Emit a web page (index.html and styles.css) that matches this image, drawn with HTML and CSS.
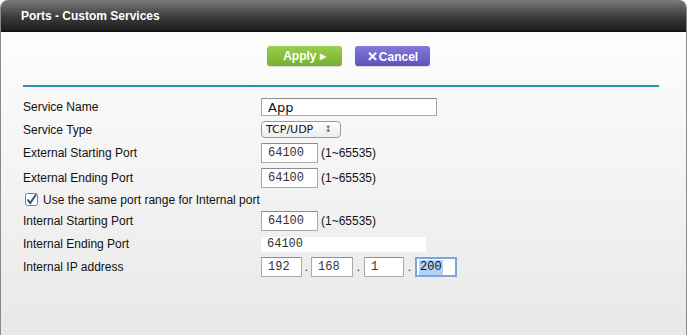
FILE: index.html
```html
<!DOCTYPE html>
<html lang="en">
<head>
  <meta charset="UTF-8">
  <title>Ports - Custom Services</title>
  <link rel="stylesheet" href="styles.css">
</head>
<body>
  <div class="panel">
    <div class="panel-header">Ports - Custom Services</div>

    <div class="panel-body">
      <div class="actions">
        <button class="btn btn-apply">Apply <span class="arrow">&#9654;</span></button>
        <button class="btn btn-cancel"><span class="x">&#10005;</span>Cancel</button>
      </div>

      <div class="divider"></div>

      <div class="form">
        <div class="row r1">
          <label>Service Name</label>
          <div class="field"><input class="text name" type="text" value="App"></div>
        </div>
        <div class="row r2">
          <label>Service Type</label>
          <div class="field">
            <div class="select">TCP/UDP <span class="updown">&#8597;</span></div>
          </div>
        </div>
        <div class="row r3">
          <label>External Starting Port</label>
          <div class="field"><input class="text port" type="text" value="64100"><span class="range">(1~65535)</span></div>
        </div>
        <div class="row r4">
          <label>External Ending Port</label>
          <div class="field"><input class="text port" type="text" value="64100"><span class="range">(1~65535)</span></div>
        </div>
        <div class="row r5 check-row">
          <span class="checkbox">
            <svg width="13" height="13" viewBox="0 0 13 13">
              <rect x="0.5" y="0.5" width="12" height="12" rx="2" fill="#fff" stroke="#6b7fa6"/>
              <path d="M2.5 6.5 L5.2 10 L11 1.5" fill="none" stroke="#2b4f8c" stroke-width="2"/>
            </svg>
          </span>
          <span>Use the same port range for Internal port</span>
        </div>
        <div class="row r6">
          <label>Internal Starting Port</label>
          <div class="field"><input class="text port" type="text" value="64100"><span class="range">(1~65535)</span></div>
        </div>
        <div class="row r7">
          <label>Internal Ending Port</label>
          <div class="field"><div class="plain">64100</div></div>
        </div>
        <div class="row r8">
          <label>Internal IP address</label>
          <div class="field ip">
            <input class="text octet o1" type="text" value="192"><span class="dot d1">.</span>
            <input class="text octet o2" type="text" value="168"><span class="dot">.</span>
            <input class="text octet o3" type="text" value="1"><span class="dot">.</span>
            <div class="octet focused"><span class="sel">200</span></div>
          </div>
        </div>
      </div>
    </div>
  </div>
</body>
</html>
```

FILE: styles.css
```css
body {
  margin: 0;
  font-family: "Liberation Sans", Arial, sans-serif;
  font-size: 12px;
  color: #111;
  background: #fff;
}

.panel {
  height: 335px;
  border-left: 1px solid #8a8a8a;
  border-right: 1px solid #8a8a8a;
  border-radius: 8px 8px 0 0;
  overflow: hidden;
  display: flex;
  flex-direction: column;
}

.panel-header {
  height: 32px;
  flex: none;
  background: linear-gradient(#7a7a7a, #3c3c3c 55%, #1c1c1c);
  color: #fff;
  font-weight: bold;
  font-size: 12px;
  line-height: 32px;
  padding-left: 20px;
  border-bottom: 1px solid #111;
  box-sizing: border-box;
}

.panel-body {
  flex: 1;
  background: linear-gradient(#fdfdfd, #f3f3f3 50%, #e8e8e8);
  padding-top: 14px;
}

.actions {
  display: flex;
  gap: 13px;
  padding-left: 266px;
  height: 20px;
}

.btn {
  width: 75px;
  height: 20px;
  border: none;
  border-radius: 3px;
  color: #fff;
  font-family: "Liberation Sans", Arial, sans-serif;
  font-weight: bold;
  font-size: 12px;
  padding: 0;
  box-shadow: 0 1px 1px rgba(0, 0, 0, 0.15);
}

.btn-apply {
  background: linear-gradient(#9bcf4e, #76b02c);
}

.btn-apply .arrow {
  font-size: 8px;
  vertical-align: 1px;
}

.btn-cancel {
  background: linear-gradient(#8479d8, #5f52bd);
}

.btn-cancel .x {
  font-size: 13px;
  margin-right: 1px;
}

.divider {
  height: 2px;
  background: #2b8fb3;
  margin: 19px 27px 0 22px;
}

.form {
  margin-top: 9px;
  padding-left: 22px;
}

.row {
  display: grid;
  grid-template-columns: 238px 1fr;
  align-items: center;
}

.r1 { height: 22px; }
.r2 { height: 23px; }
.r3 { height: 24px; }
.r4 { height: 25px; }
.r5 { height: 19px; }
.r6 { height: 24px; }
.r7 { height: 22px; }
.r8 { height: 24px; }

.field {
  display: flex;
  align-items: center;
}

.text {
  box-sizing: border-box;
  border: 1px solid #a9a9a9;
  border-top-color: #8c8c8c;
  background: #fff;
  padding: 0 6px;
  margin: 0;
  color: #333;
  outline: none;
}

.name {
  width: 176px;
  height: 18px;
  font-family: "DejaVu Sans", sans-serif;
  font-size: 13px;
  color: #111;
}

.port {
  width: 57px;
  height: 20px;
  font-family: "Liberation Mono", monospace;
  font-size: 12px;
}

.range {
  margin-left: 3px;
}

.select {
  box-sizing: border-box;
  width: 80px;
  height: 17px;
  border: 1px solid #9a9a9a;
  border-radius: 4px;
  background: linear-gradient(#ffffff, #ececec);
  font-family: "DejaVu Sans", sans-serif;
  font-size: 11px;
  line-height: 15px;
  padding-left: 4px;
  display: flex;
  justify-content: space-between;
}

.updown {
  font-size: 9px;
  color: #555;
  margin-right: 8px;
}

.check-row {
  display: flex;
  gap: 5px;
  padding-left: 2px;
}

.checkbox {
  display: flex;
}

.plain {
  width: 165px;
  height: 15px;
  background: #fff;
  font-family: "Liberation Mono", monospace;
  font-size: 12px;
  line-height: 15px;
  padding-left: 6px;
  box-sizing: border-box;
  color: #333;
}

.ip .dot {
  width: 11px;
  text-align: center;
  font-size: 12px;
}

.ip .d1 { width: 9px; }

.octet {
  height: 20px;
  font-family: "Liberation Mono", monospace;
  font-size: 12px;
}

.o1 { width: 41px; }
.o2 { width: 42px; }
.o3 { width: 40px; }

.focused {
  box-sizing: border-box;
  width: 42px;
  border: 2px solid #7ea6de;
  background: #fff;
  padding: 1px 2px;
  display: flex;
  align-items: center;
}

.sel {
  background: #b3d1f5;
  color: #111;
  line-height: 15px;
  padding: 0 1px;
}
```
